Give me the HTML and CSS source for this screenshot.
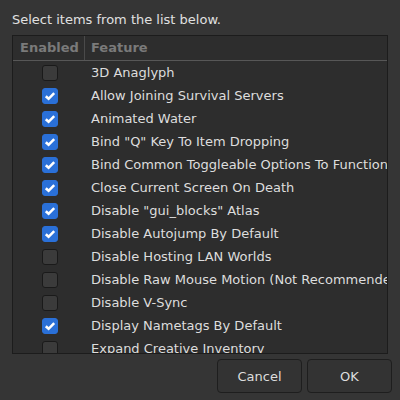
FILE: index.html
```html
<!DOCTYPE html>
<html>
<head>
<meta charset="utf-8">
<link rel="stylesheet" href="styles.css">
</head>
<body>
<div class="dialog">
  <div class="prompt">Select items from the list below.</div>
  <div class="frame">
    <div class="head">
      <div class="hcell c1">Enabled</div>
      <div class="hcell c2">Feature</div>
    </div>
    <div class="rows">
      <div class="row"><div class="c1"><span class="cb"></span></div><div class="c2">3D Anaglyph</div></div>
      <div class="row"><div class="c1"><span class="cb on"><svg viewBox="0 0 16 16"><path d="M3.8 8.2 L6.6 10.8 L12.2 5.2" /></svg></span></div><div class="c2">Allow Joining Survival Servers</div></div>
      <div class="row"><div class="c1"><span class="cb on"><svg viewBox="0 0 16 16"><path d="M3.8 8.2 L6.6 10.8 L12.2 5.2" /></svg></span></div><div class="c2">Animated Water</div></div>
      <div class="row"><div class="c1"><span class="cb on"><svg viewBox="0 0 16 16"><path d="M3.8 8.2 L6.6 10.8 L12.2 5.2" /></svg></span></div><div class="c2">Bind "Q" Key To Item Dropping</div></div>
      <div class="row"><div class="c1"><span class="cb on"><svg viewBox="0 0 16 16"><path d="M3.8 8.2 L6.6 10.8 L12.2 5.2" /></svg></span></div><div class="c2">Bind Common Toggleable Options To Function Keys</div></div>
      <div class="row"><div class="c1"><span class="cb on"><svg viewBox="0 0 16 16"><path d="M3.8 8.2 L6.6 10.8 L12.2 5.2" /></svg></span></div><div class="c2">Close Current Screen On Death</div></div>
      <div class="row"><div class="c1"><span class="cb on"><svg viewBox="0 0 16 16"><path d="M3.8 8.2 L6.6 10.8 L12.2 5.2" /></svg></span></div><div class="c2">Disable "gui_blocks" Atlas</div></div>
      <div class="row"><div class="c1"><span class="cb on"><svg viewBox="0 0 16 16"><path d="M3.8 8.2 L6.6 10.8 L12.2 5.2" /></svg></span></div><div class="c2">Disable Autojump By Default</div></div>
      <div class="row"><div class="c1"><span class="cb"></span></div><div class="c2">Disable Hosting LAN Worlds</div></div>
      <div class="row"><div class="c1"><span class="cb"></span></div><div class="c2">Disable Raw Mouse Motion (Not Recommended)</div></div>
      <div class="row"><div class="c1"><span class="cb"></span></div><div class="c2">Disable V-Sync</div></div>
      <div class="row"><div class="c1"><span class="cb on"><svg viewBox="0 0 16 16"><path d="M3.8 8.2 L6.6 10.8 L12.2 5.2" /></svg></span></div><div class="c2">Display Nametags By Default</div></div>
      <div class="row"><div class="c1"><span class="cb"></span></div><div class="c2">Expand Creative Inventory</div></div>
    </div>
  </div>
  <div class="buttons">
    <button class="btn">Cancel</button>
    <button class="btn">OK</button>
  </div>
</div>
</body>
</html>
```
FILE: styles.css
```css
html, body {
  margin: 0;
  padding: 0;
  background: #353535;
  width: 400px;
  height: 400px;
  overflow: hidden;
}
.dialog {
  font-family: "DejaVu Sans", sans-serif;
  font-size: 13px;
  color: #dddddd;
  padding: 11px 8px 0 12px;
  display: flex;
  flex-direction: column;
}
.prompt {
  height: 19px;
  line-height: 17px;
  margin-bottom: 5px;
  color: #e0e0e0;
}
.frame {
  width: 374px;
  height: 317px;
  border: 1px solid #1c1c1c;
  background: #2d2d2d;
  overflow: hidden;
  display: flex;
  flex-direction: column;
}
.head {
  display: flex;
  height: 24px;
  border-bottom: 1px solid #575757;
  flex: none;
}
.hcell {
  font-weight: bold;
  color: #7a7a7a;
  line-height: 24px;
}
.head .c1 {
  width: 72px;
  padding-left: 7px;
  box-sizing: border-box;
  border-right: 1px solid #4a4a4a;
}
.head .c2 {
  padding-left: 6px;
}
.rows {
  display: flex;
  flex-direction: column;
}
.row {
  display: flex;
  height: 23px;
  align-items: center;
  flex: none;
}
.row .c1 {
  width: 73px;
  display: flex;
  justify-content: center;
  flex: none;
}
.row .c2 {
  padding-left: 5px;
  white-space: nowrap;
  line-height: 23px;
}
.cb {
  width: 14px;
  height: 14px;
  border: 1px solid #1a1a1a;
  border-radius: 3px;
  background: #3b3b3b;
  display: block;
}
.cb.on {
  background: #2a70d8;
  border-color: #2a70d8;
  position: relative;
}
.cb svg {
  position: absolute;
  left: -1px;
  top: -1px;
  width: 16px;
  height: 16px;
}
.cb svg path {
  fill: none;
  stroke: #ffffff;
  stroke-width: 2.6;
}
.buttons {
  display: flex;
  justify-content: flex-end;
  gap: 5px;
  margin-top: 5px;
}
.btn {
  width: 85px;
  height: 34px;
  background: #333333;
  border: 1px solid #1e1e1e;
  border-radius: 4px;
  color: #dddddd;
  font-family: "DejaVu Sans", sans-serif;
  font-size: 13px;
  padding: 0;
}
```
